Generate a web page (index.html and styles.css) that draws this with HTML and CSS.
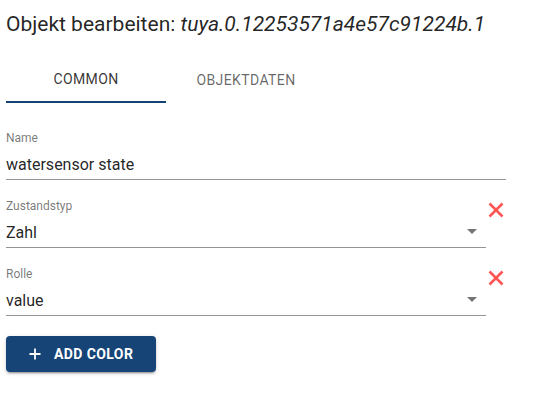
FILE: index.html
```html
<!DOCTYPE html>
<html>
<head>
<meta charset="utf-8">
<link rel="stylesheet" href="styles.css">
</head>
<body>
<div class="page">
  <h1 class="title">Objekt bearbeiten: <i>tuya.0.12253571a4e57c91224b.1</i></h1>
  <div class="tabs">
    <div class="tab active">COMMON</div>
    <div class="tab">OBJEKTDATEN</div>
  </div>
  <div class="form">
    <div class="field name">
      <label class="label">Name</label>
      <div class="input">watersensor state</div>
    </div>
    <div class="row">
      <div class="field select">
        <label class="label">Zustandstyp</label>
        <div class="input">Zahl<span class="arrow"></span></div>
      </div>
      <svg class="del" width="16" height="16" viewBox="0 0 16 16"><path d="M1.5 1.5L14.5 14.5M14.5 1.5L1.5 14.5" stroke="#ff5555" stroke-width="2.6" fill="none"/></svg>
    </div>
    <div class="row">
      <div class="field select">
        <label class="label">Rolle</label>
        <div class="input">value<span class="arrow"></span></div>
      </div>
      <svg class="del" width="16" height="16" viewBox="0 0 16 16"><path d="M1.5 1.5L14.5 14.5M14.5 1.5L1.5 14.5" stroke="#ff5555" stroke-width="2.6" fill="none"/></svg>
    </div>
  </div>
  <button class="btn"><svg width="12" height="12" viewBox="0 0 12 12"><path d="M6 0.5V11.5M0.5 6H11.5" stroke="#fff" stroke-width="1.8"/></svg><span>ADD COLOR</span></button>
</div>
</body>
</html>
```
FILE: styles.css
```css
html, body { margin: 0; padding: 0; background: #fff; }
body { font-family: Roboto, "Noto Sans", sans-serif; color: rgba(0,0,0,0.87); }
.page { padding: 8px 6px; }
.title { margin: 0; font-size: 21px; line-height: 32px; font-weight: 400; color: rgba(0,0,0,0.87); }
.title i { font-style: italic; }
.tabs { display: flex; margin-top: 15px; height: 48px; }
.tab { width: 160px; display: flex; align-items: center; justify-content: center; font-size: 14px; font-weight: 400; letter-spacing: 0.4px; color: rgba(0,0,0,0.6); box-sizing: border-box; padding-top: 2px; }
.tab.active { color: rgba(0,0,0,0.8); border-bottom: 2px solid #164477; }
.form { margin-top: 27px; display: flex; flex-direction: column; gap: 18px; }
.field { display: flex; flex-direction: column; }
.field.name { width: 500px; }
.field.select { width: 480px; }
.label { font-size: 12px; line-height: 16px; color: rgba(0,0,0,0.54); }
.input { position: relative; font-size: 16px; line-height: 19px; padding: 9px 0 5px; border-bottom: 1px solid rgba(0,0,0,0.42); }
.arrow { position: absolute; right: 9px; top: 15px; width: 0; height: 0; border-left: 5px solid transparent; border-right: 5px solid transparent; border-top: 5px solid rgba(0,0,0,0.54); }
.row { display: flex; align-items: flex-start; }
.del { margin-left: 2px; margin-top: 4px; }
.btn { margin-top: 20px; width: 150px; height: 36px; border: none; border-radius: 4px; background: #164477; color: #fff; display: flex; align-items: center; padding: 0 0 0 23px; gap: 13px; font-family: Roboto, sans-serif; font-size: 14px; font-weight: 700; letter-spacing: 0.4px; box-shadow: 0 3px 1px -2px rgba(0,0,0,0.2), 0 2px 2px 0 rgba(0,0,0,0.14), 0 1px 5px 0 rgba(0,0,0,0.12); }
```
